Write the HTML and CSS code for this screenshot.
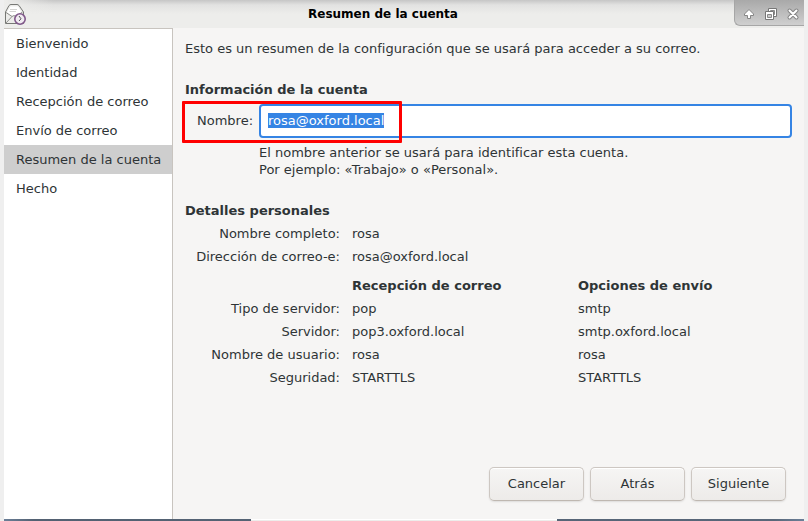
FILE: index.html
```html
<!DOCTYPE html>
<html lang="es">
<head>
<meta charset="utf-8">
<title>Resumen de la cuenta</title>
<link rel="stylesheet" href="styles.css">
</head>
<body>
<div class="window">
  <header class="titlebar">
    <svg class="app-icon" viewBox="0 0 22 22" aria-hidden="true">
      <path d="M1.500 9 L5 2.500 Q6 1.500 7 1.500 H13 Q14 1.500 15 2.500 L19.500 9 V20.500 H1.500 Z" fill="#ececea" stroke="#777875"/>
      <path d="M3 9 L6.500 3.500 H14 L17.500 9 L12 13 H8 Z" fill="#fff"/>
      <path d="M2 20 L8 13.500 Q10 11.500 12 13.500 L18 20 M2 9.500 L8 13.500 M18.500 9 L12 13.500" fill="none" stroke="#8f908d"/>
      <path d="M6 6.500 H13 M5.500 8.500 H12" stroke="#d4d4d2"/>
      <circle cx="16" cy="16" r="5.200" fill="#f0ebf1" stroke="#80588a" stroke-width="1.600"/>
      <path d="M15 13 L17 15.800 L15 18" fill="none" stroke="#555"/>
    </svg>
    <h1 class="title">Resumen de la cuenta</h1>
    <div class="controls">
      <button class="control" type="button" aria-label="Enrollar">
        <svg viewBox="0 0 14 14"><path d="M7 2.500 L11.500 7 V8.500 H8.500 V11.500 H5.500 V8.500 H2.500 V7 Z" fill="#fff" stroke="#858585" stroke-linejoin="round"/></svg>
      </button>
      <button class="control" type="button" aria-label="Restaurar">
        <svg viewBox="0 0 14 14"><path d="M4.500 1.500 H12.500 V9.500 H4.500 Z" fill="#fff" stroke="#777"/><path d="M6.500 3.500 H10.500 V7.500 H6.500 Z" fill="#ccc" stroke="#888"/><path d="M1.500 4.500 H9.500 V12.500 H1.500 Z" fill="#fff" stroke="#777"/><path d="M3.500 7.500 H7.500 V10.500 H3.500 Z" fill="#ccc" stroke="#888"/></svg>
      </button>
      <button class="control" type="button" aria-label="Cerrar">
        <svg viewBox="0 0 14 14"><path d="M3.500 3.500 L10.500 10.500 M10.500 3.500 L3.500 10.500" stroke="#858585" stroke-width="4" stroke-linecap="round"/><path d="M3.500 3.500 L10.500 10.500 M10.500 3.500 L3.500 10.500" stroke="#fff" stroke-width="2" stroke-linecap="round"/></svg>
      </button>
    </div>
  </header>
  <div class="body">
    <nav class="steps">
      <a class="step" href="#bienvenido">Bienvenido</a>
      <a class="step" href="#identidad">Identidad</a>
      <a class="step" href="#recepcion">Recepción de correo</a>
      <a class="step" href="#envio">Envío de correo</a>
      <a class="step current" href="#resumen" aria-current="step">Resumen de la cuenta</a>
      <a class="step" href="#hecho">Hecho</a>
    </nav>
    <main class="page">
      <p class="intro">Esto es un resumen de la configuración que se usará para acceder a su correo.</p>
      <h2 class="heading">Información de la cuenta</h2>
      <div class="name-row">
        <label class="name-label" for="account-name">Nombre:</label>
        <input class="name-input" id="account-name" type="text" value="rosa@oxford.local" spellcheck="false" autocomplete="off" autofocus>
        <div class="highlight"></div>
      </div>
      <p class="hint">El nombre anterior se usará para identificar esta cuenta.<br>Por ejemplo: «Trabajo» o «Personal».</p>
      <h2 class="heading">Detalles personales</h2>
      <table class="details">
        <tr><th scope="row">Nombre completo:</th><td>rosa</td></tr>
        <tr><th scope="row">Dirección de correo-e:</th><td>rosa@oxford.local</td></tr>
      </table>
      <table class="details servers">
        <thead><tr><td></td><th scope="col">Recepción de correo</th><th scope="col">Opciones de envío</th></tr></thead>
        <tbody>
          <tr><th scope="row">Tipo de servidor:</th><td>pop</td><td>smtp</td></tr>
          <tr><th scope="row">Servidor:</th><td>pop3.oxford.local</td><td>smtp.oxford.local</td></tr>
          <tr><th scope="row">Nombre de usuario:</th><td>rosa</td><td>rosa</td></tr>
          <tr><th scope="row">Seguridad:</th><td>STARTTLS</td><td>STARTTLS</td></tr>
        </tbody>
      </table>
      <div class="actions">
        <button class="button" type="button">Cancelar</button>
        <button class="button" type="button">Atrás</button>
        <button class="button" type="button">Siguiente</button>
      </div>
    </main>
  </div>
  <div class="desktop-edge"><div class="panel-edge"></div></div>
</div>
<script src="script.js"></script>
</body>
</html>
```
FILE: styles.css
```css
* {
  box-sizing: border-box;
}

body {
  margin: 0;
  background: #efefef;
  color: #2e3436;
  font: 13px/17px "DejaVu Sans", sans-serif;
}

h1, h2, p {
  margin: 0;
}

.window {
  display: flex;
  flex-direction: column;
  min-height: 100vh;
  margin: 0 4px;
}

.titlebar {
  display: grid;
  grid-template-columns: 70px 1fr 70px;
  height: 28px;
  background:
    linear-gradient(90deg, #ededeb, #ededeb00 50px),
    linear-gradient(#c6c6c6, #e2e2e1 5px, #ededeb 14px);
}

.app-icon {
  width: 22px;
  height: 22px;
  margin-top: 3px;
}

.title {
  align-self: center;
  padding-right: 42px;
  color: #000;
  font-size: 12px;
  text-align: center;
}

.controls {
  display: flex;
  gap: 8px;
  align-items: center;
  justify-content: flex-end;
  height: 26px;
  padding: 2px 4px 0 0;
  border: solid #a6a6a6;
  border-width: 0 0 1px 1px;
  border-bottom-left-radius: 6px;
  background: linear-gradient(#a9a9a9, #cfcfcf);
}

.control {
  display: flex;
  padding: 0;
  border: 0;
  background: none;
}

.control svg {
  width: 14px;
  height: 14px;
}

.body {
  display: flex;
  flex: 1;
  background: #f6f5f4;
}

.steps {
  width: 169px;
  border: solid #c8c4bf;
  border-width: 1px 1px 0 0;
  background: #fff;
}

.step {
  display: block;
  padding: 6px 12px;
  color: inherit;
  text-decoration: none;
  white-space: nowrap;
}

.current {
  background: #cecece;
}

.page {
  display: flex;
  flex: 1;
  flex-direction: column;
  padding: 12px;
}

.heading {
  margin-top: 24px;
  font-size: 13px;
}

.name-row {
  position: relative;
  display: flex;
  align-items: center;
  margin-top: 6px;
}

.name-label {
  width: 74px;
  padding: 0 0 2px 12px;
}

.name-input {
  flex: 1;
  min-width: 0;
  height: 34px;
  padding: 0 7px 2px;
  border: 2px solid #3584e4;
  border-radius: 4px;
  outline: 0;
  background: #fff;
  color: inherit;
  font: inherit;
}

.name-input::selection {
  background: #3584e4;
  color: #fff;
}

.highlight {
  position: absolute;
  top: -3px;
  bottom: -5px;
  left: -3px;
  width: 220px;
  border: 3px solid #f00;
  border-radius: 1px;
  pointer-events: none;
}

.hint {
  margin: 6px 0 0 74px;
}

.details {
  margin-top: 3px;
  border-collapse: collapse;
}

.servers {
  width: 100%;
  margin-top: 6px;
  table-layout: fixed;
}

.details td,
.details th {
  padding: 3px 0;
  text-align: left;
}

.details th[scope="row"] {
  width: 167px;
  padding-right: 12px;
  font-weight: normal;
  text-align: right;
}

.servers thead td {
  width: 167px;
}

.servers thead th:nth-child(2) {
  width: 226px;
}

.actions {
  display: flex;
  gap: 6px;
  justify-content: flex-end;
  margin-top: auto;
  padding: 6px;
}

.button {
  min-width: 95px;
  height: 34px;
  padding: 0 15px 2px;
  border: 1px solid #cdc7c2;
  border-bottom-color: #bfb8b1;
  border-radius: 5px;
  background: linear-gradient(#f6f5f4, #edebe9);
  box-shadow: inset 0 1px #fff, 0 1px 2px #0000001a;
  color: inherit;
  font: inherit;
}

.desktop-edge {
  height: 2px;
  background: linear-gradient(90deg, #6b7f98, #536172 30px, #586779 calc(100% - 30px), #6b7f98);
}

.panel-edge {
  width: 306px;
  height: 2px;
  margin-left: 247px;
  border-top: 1px solid #fff;
  background: #ededeb;
}
```
FILE: script.js
```js
const nameInput = document.getElementById("account-name");
nameInput.focus();
nameInput.select();
```
